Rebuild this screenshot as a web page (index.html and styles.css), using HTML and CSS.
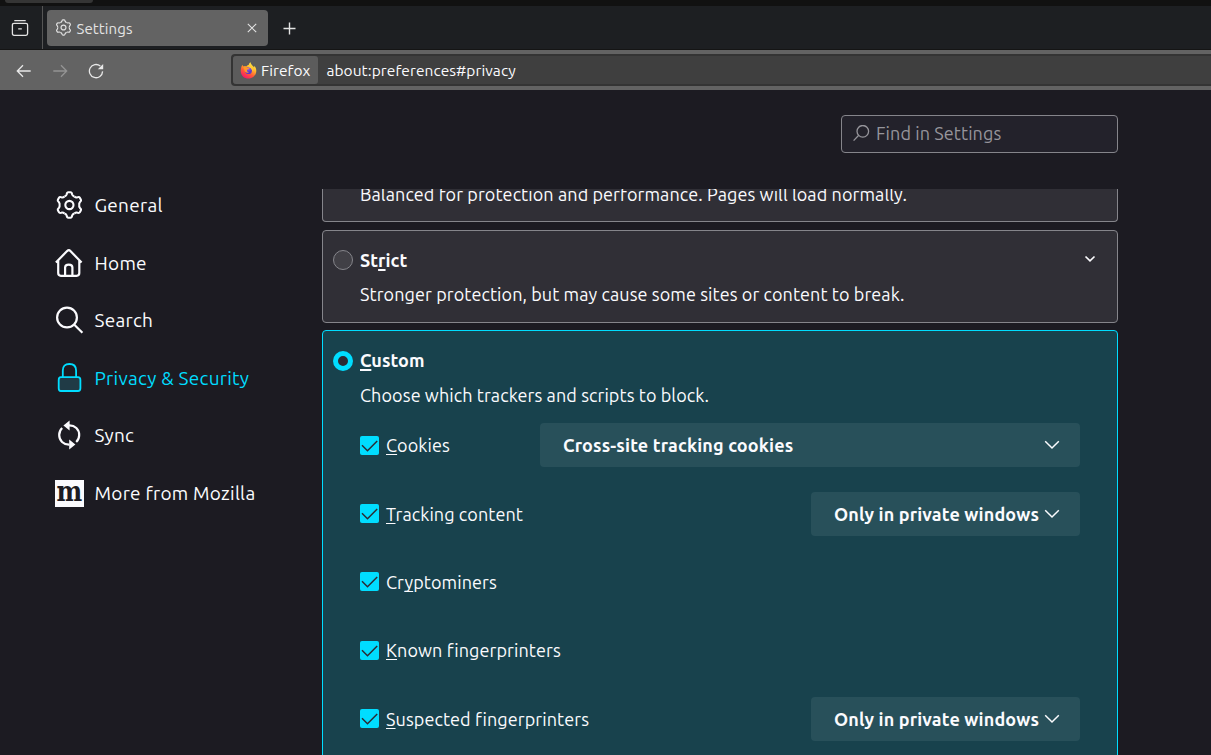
FILE: index.html
```
<!DOCTYPE html>
<html lang="en">
<head>
<meta charset="utf-8">
<title>Settings</title>
<link rel="stylesheet" href="styles.css">
</head>
<body>
<svg class="defs" aria-hidden="true">
  <defs>
    <path id="tooth" d="M-5.2-9C-3.9-9.4-3.2-9.9-2.9-11C-2.6-12.7-2.2-13.3-1.2-13.3H1.2C2.2-13.3 2.6-12.7 2.9-11C3.2-9.9 3.9-9.4 5.2-9"/>
    <symbol id="gear" viewBox="-15 -15 30 30">
      <use href="#tooth"/><use href="#tooth" transform="rotate(60)"/><use href="#tooth" transform="rotate(120)"/>
      <use href="#tooth" transform="rotate(180)"/><use href="#tooth" transform="rotate(240)"/><use href="#tooth" transform="rotate(300)"/>
      <circle r="4.3"/>
    </symbol>
    <symbol id="check" viewBox="0 0 19 19"><path d="M2 9.3L7.5 14.7L17.2 5"/></symbol>
    <symbol id="chevron" viewBox="0 0 16 10"><path d="M1.2 1.3L8 8L14.8 1.3"/></symbol>
  </defs>
</svg>
<div class="window">
  <div class="titlebar"><span class="titlebar-tab"></span></div>
  <div class="tabs">
    <div class="recent">
      <svg class="line" width="18" height="18" viewBox="0 0 18 18"><path d="M3.3 1.6H14.7M3 4.4H15Q16.6 4.4 16.6 6V14.6Q16.6 16.3 15 16.3H3Q1.4 16.3 1.4 14.6V6Q1.4 4.4 3 4.4ZM7.2 9.8H10.8"/></svg>
    </div>
    <div class="tab">
      <svg class="line tab-gear" width="17" height="17"><use href="#gear"/></svg>
      <span class="tab-label">Settings</span>
      <svg class="line close" width="10" height="10" viewBox="0 0 10 10"><path d="M.8.8L9.2 9.2M9.2.8L.8 9.2"/></svg>
    </div>
    <svg class="line plus" width="13" height="13" viewBox="0 0 13 13"><path d="M6.5.5V12.5M.5 6.5H12.5"/></svg>
  </div>
  <div class="toolbar">
    <div class="nav-buttons">
      <svg class="line" width="16" height="16" viewBox="0 0 16 16"><path d="M14.7 8H1.5M7 2.3L1.3 8L7 13.7"/></svg>
      <svg class="line disabled" width="16" height="16" viewBox="0 0 16 16"><path d="M1.3 8H14.5M9 2.3L14.7 8L9 13.7"/></svg>
      <svg class="line" width="16" height="16" viewBox="0 0 16 16"><path d="M12.3 3.1A6.6 6.6 0 1 0 14.6 8.4"/><path class="solid" d="M15.2 1V6.2H9.8Z"/></svg>
    </div>
    <div class="urlbar">
      <div class="identity">
        <svg width="17" height="17" viewBox="0 0 18 18">
          <defs>
            <linearGradient id="flame" x1=".85" y1=".05" x2=".3" y2="1"><stop offset="0" stop-color="#fff44f"/><stop offset=".35" stop-color="#ffb62d"/><stop offset=".65" stop-color="#ff5a36"/><stop offset="1" stop-color="#f5156c"/></linearGradient>
            <radialGradient id="globe" cx=".5" cy=".2"><stop offset="0" stop-color="#9059ff"/><stop offset="1" stop-color="#5b3cc4"/></radialGradient>
          </defs>
          <path fill="url(#flame)" d="M2.6 3C2.7 4 3.2 4.4 3.7 4.7C4.6 4.3 5.8 4.4 6.6 4.8C7.2 3.8 8.2 3.2 9.2 3.2C9.3 2.1 10.1 1 11.2.3C11.3 2.2 12.6 3 13.6 4.2C14.2 4.6 14.4 5.1 14.5 5.5C15 5.4 15.1 4.6 14.9 4.1C16.8 5.8 17.4 8 17.2 10C16.8 14.4 13.3 17.6 9 17.6C4.4 17.6.8 14.1.8 9.5C.8 7 1.4 4.7 2.6 3Z"/>
          <circle cx="9" cy="9.2" r="3.6" fill="url(#globe)"/>
          <path fill="#ff9929" d="M3.5 5.2C5.3 4.2 7.2 5 8 6.4H10C9.7 7.5 8.5 7.9 7.4 8.2C7.2 9.6 7.9 10.6 9.5 10.8C7.5 12.5 4.8 10.9 4.7 8.5Z"/>
          <path fill="#ffcd35" d="M9.2 3.3C12.4 4.2 14.3 7.3 13.1 10.3C12.8 7.8 11.4 6.2 9.2 5.6Z"/>
        </svg>
        <span>Firefox</span>
      </div>
      <span class="address">about:preferences#privacy</span>
    </div>
  </div>
  <div class="page">
    <nav class="sidebar">
      <a class="category"><svg class="line" width="30" height="30" viewBox="-0.4 0 30 30"><use href="#gear" x=".7" y=".7" width="28.6" height="28.6"/></svg><span>General</span></a>
      <a class="category"><svg class="line" width="30" height="30" viewBox="0 0 30 30"><path d="M1.9 14.4L13.1 3.1Q15 1.3 16.4 3.1L27.6 14.4M4.2 12.5V25.1Q4.2 27.8 6.9 27.8H22.6Q25.3 27.8 25.3 25.1V12.5M11.1 27.5V19.5Q11.1 16.6 14.8 16.6Q18.4 16.6 18.4 19.5V27.5"/></svg><span>Home</span></a>
      <a class="category"><svg class="line" width="30" height="30" viewBox="-0.6 0 30 30"><circle cx="12.4" cy="12.5" r="9.9"/><path d="M19.5 19.5L27.8 27.8"/></svg><span>Search</span></a>
      <a class="category selected"><svg class="line lock" width="30" height="30" viewBox="-0.4 0 30 30"><path class="tint" d="M6.4 14.2H23.6Q26 14.2 26 17V25.2Q26 28 23.6 28H6.4Q4.3 28 4.3 25.2V17Q4.3 14.2 6.4 14.2Z"/><path d="M8.4 14V7.5Q8.4 1 15 1Q21.7 1 21.7 7.5V14"/></svg><span>Privacy &amp; Security</span></a>
      <a class="category sync"><svg class="line" width="30" height="30" viewBox="0 0 30 30"><path d="M15 5.4C21 5.2 25.2 9.5 25.2 15C25.2 18 24 20.4 22.2 22M15.4 24.6C9.4 24.8 5.2 20.5 5.2 15C5.2 12 6.3 9.7 8.2 8"/><path class="solid" d="M15.6.6V10.6L9.4 5.5ZM15.2 19.4V29.4L21.4 24.5Z"/></svg><span>Sync</span></a>
      <a class="category"><span class="mozilla"><span>m</span></span><span>More from Mozilla</span></a>
    </nav>
    <main class="content">
      <div class="search-field">
        <svg class="line" width="17" height="17" viewBox="0.4 0.4 17 17"><circle cx="10.2" cy="6.7" r="5.8"/><path d="M5.9 10.9L1 16"/></svg>
        <span>Find in Settings</span>
      </div>
      <div class="scroller">
        <section class="card standard"><p class="desc">Balanced for protection and performance. Pages will load normally.</p></section>
        <section class="card strict">
          <div class="heading"><span class="radio"></span><h2>St<u>r</u>ict</h2>
            <svg class="line expand" width="12" height="8" viewBox="0 0 12 8"><path d="M1.5 1.5L6 5.8L10.5 1.5"/></svg></div>
          <p class="desc">Stronger protection, but may cause some sites or content to break.</p>
        </section>
        <section class="card custom">
          <div class="heading"><span class="radio checked"></span><h2><u>C</u>ustom</h2></div>
          <p class="desc">Choose which trackers and scripts to block.</p>
          <div class="options">
            <div class="option"><span class="checkbox"><svg class="line" width="19" height="19"><use href="#check"/></svg></span><label><u>C</u>ookies</label>
              <div class="select wide"><span>Cross-site tracking cookies</span><svg class="line" width="16" height="10"><use href="#chevron"/></svg></div></div>
            <div class="option"><span class="checkbox"><svg class="line" width="19" height="19"><use href="#check"/></svg></span><label><u>T</u>racking content</label>
              <div class="select"><span>Only in private windows</span><svg class="line" width="16" height="10"><use href="#chevron"/></svg></div></div>
            <div class="option"><span class="checkbox"><svg class="line" width="19" height="19"><use href="#check"/></svg></span><label>Cr<u>y</u>ptominers</label></div>
            <div class="option"><span class="checkbox"><svg class="line" width="19" height="19"><use href="#check"/></svg></span><label><u>K</u>nown fingerprinters</label></div>
            <div class="option"><span class="checkbox"><svg class="line" width="19" height="19"><use href="#check"/></svg></span><label><u>S</u>uspected fingerprinters</label>
              <div class="select"><span>Only in private windows</span><svg class="line" width="16" height="10"><use href="#chevron"/></svg></div></div>
          </div>
        </section>
      </div>
    </main>
  </div>
</div>
</body>
</html>
```
FILE: styles.css
```
* { box-sizing: border-box; }
body { margin: 0; background: #1c1b22; color: #fbfbfe; font: 18px/24px Ubuntu, "Noto Sans", sans-serif; letter-spacing: 0.09px; }
h2, p { margin: 0; }
.defs { position: absolute; width: 0; height: 0; }
.window { height: 755px; display: flex; flex-direction: column; overflow: hidden; }
.line { fill: none; stroke: currentColor; stroke-width: 1.3; flex: none; }
.line .solid { fill: currentColor; stroke: none; }

.titlebar { height: 6px; background: #111; padding-left: 5px; }
.titlebar-tab { display: block; width: 88px; height: 3px; background: #353535; border-radius: 0 0 5px 5px; }
.tabs { height: 44px; background: #1d1f22; display: flex; align-items: center; border-bottom: 1px solid #151515; color: #e3e3e3; }
.recent { width: 43px; align-self: stretch; display: flex; align-items: center; padding-left: 11px; border-right: 1px solid #555; }
.tab { width: 221px; height: 36px; margin-left: 4px; padding: 0 11px 0 7.5px; border-radius: 4px; background: #636363; display: flex; align-items: center; font-size: 15px; }
.tab-gear { stroke-width: 2.1; }
.tab-label { margin: 2px 0 0 5px; }
.close { margin-left: auto; stroke-width: 1.1; }
.plus { margin: 1px 0 0 15px; stroke-width: 1.4; }

.toolbar { height: 40px; background: #636363; display: flex; align-items: center; color: #e8e8e8; font-size: 15.5px; }
.nav-buttons { width: 231px; padding: 2px 0 0 16px; display: flex; gap: 20px; }
.disabled { color: #949494; }
.urlbar { flex: 1; height: 32px; border: 2px solid #343434; border-right: 0; border-radius: 4px 0 0 4px; background: #3f3f3f; display: flex; align-items: center; color: #fbfbfe; letter-spacing: 0.07px; }
.identity { width: 85px; height: 28px; border-radius: 3px; background: #5c5c5c; display: flex; align-items: center; padding-left: 7px; gap: 4px; }
.identity span { padding-top: 1px; }
.address { margin-left: 8.4px; padding-top: 1px; }

.page { flex: 1; min-height: 0; display: flex; }
.sidebar { width: 322px; padding: 86.4px 0 0 54px; }
.category { height: 57.6px; display: flex; align-items: center; gap: 10.5px; font-size: 19px; letter-spacing: 0.26px; }
.category .line { stroke-width: 2.2; }
.category.sync { padding-bottom: 1px; }
.selected { color: #00ddff; }
.category .lock { stroke-width: 1.8; }
.selected .tint { fill: #203b46; }
.mozilla { width: 29px; height: 27px; margin: 0 0 0 1px; background: #fbfbfe; color: #1c1b22; font: bold 27px/24px "DejaVu Serif", serif; letter-spacing: 0; display: flex; justify-content: center; align-items: center; padding-bottom: 3px; }
.mozilla span { transform: scaleX(0.9); }

.content { width: 796px; padding-top: 25px; display: flex; flex-direction: column; }
.search-field { align-self: flex-end; width: 277px; height: 38px; flex: none; border: 1px solid #85858b; border-radius: 4px; background: #23222b; color: #96959b; display: flex; align-items: center; padding: 0 0 2px 10.5px; gap: 6.5px; }
.scroller { margin-top: 36px; flex: 1; min-height: 0; overflow: hidden; display: flex; flex-direction: column; gap: 8px; }
.card { flex: none; border: 1px solid #85858b; border-radius: 4px; background: #302f36; }
.standard { height: 33px; border-top: 0; border-radius: 0 0 4px 4px; }
.standard .desc { margin-top: -7px; }
.strict { height: 93px; padding-top: 17px; }
.custom { height: 500px; margin-top: -1px; padding-top: 17px; border-color: #00ddff; background: #18424d; }
.heading { display: flex; align-items: center; height: 24px; padding: 0 21px 0 10px; }
.radio { width: 20px; height: 20px; border-radius: 50%; border: 1px solid #85858b; background: #414046; margin-right: 7px; }
.radio.checked { border: 5px solid #00ddff; background: #2b2a33; margin-top: 1px; }
h2 { font-size: 18px; line-height: 24px; font-weight: 700; letter-spacing: 0.05px; }
u { text-decoration: underline; text-decoration-thickness: 1px; text-underline-offset: 2px; text-decoration-skip-ink: none; }
h2 u { text-decoration-thickness: 2px; }
.expand { margin: 0 0 3px auto; stroke-width: 1.7; }
.desc { padding-left: 37px; white-space: nowrap; }
.strict .desc { margin-top: 10px; }
.custom .desc { margin-top: 11px; }
.options { margin-top: 4px; padding: 0 37px; }
.option { height: 68.4px; display: flex; align-items: center; }
.checkbox { width: 19px; height: 19px; border-radius: 2px; background: #00ddff; color: #2b2a33; display: flex; margin-right: 7px; }
.checkbox .line { stroke-width: 1.5; }
.select { width: 269px; height: 44px; margin-left: auto; padding: 0 20.5px 0 23px; border-radius: 4px; background: #28505a; display: flex; align-items: center; justify-content: space-between; font-weight: 700; white-space: nowrap; letter-spacing: 0.15px; }
.select.wide { width: 540px; }
.select .line { stroke-width: 1.5; }
```
